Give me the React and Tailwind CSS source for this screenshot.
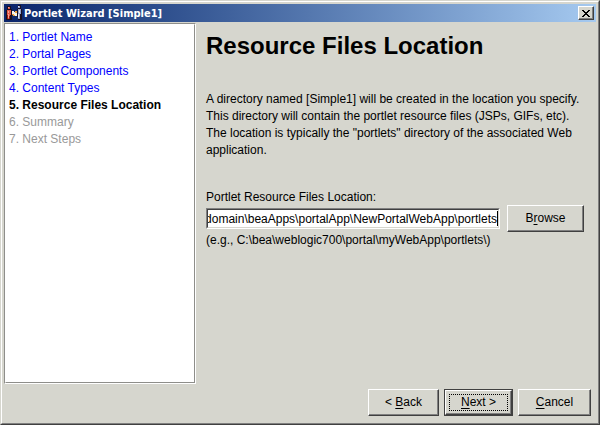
import { useLayoutEffect, useRef } from 'react';

const STEPS = [
  'Portlet Name',
  'Portal Pages',
  'Portlet Components',
  'Content Types',
  'Resource Files Location',
  'Summary',
  'Next Steps',
];
const CURRENT = 4;

const RAISED =
  'border border-t-white border-l-white border-r-[#404040] border-b-[#404040] shadow-[inset_-1px_-1px_0_#808080]';

function WizardIcon() {
  return (
    <svg width="16" height="16" viewBox="0 0 16 16" shapeRendering="crispEdges" aria-hidden="true">
      <path fill="#1a1020" d="M1 1h4v3h1v11H0V5h1zM12 0h3v4h1v11h-4v-3h-1V4h1z" />
      <path fill="#e25a48" d="M2 2h2v2H2zM1 5h4v5H4v4H1z" />
      <path fill="#f5a593" d="M2 2h1v1H2zM2 6h1v2H2zM2 9h1v4H2z" />
      <path fill="#9c1c12" d="M3 11h1v3H3zM1 10h1v4H1z" />
      <path fill="#93a2cc" d="M12 1h2v2h-2zM12 4h3v5h-1v5h-2z" />
      <path fill="#dfe5f5" d="M12 1h1v1h-1zM13 5h1v3h-1zM12 9h1v4h-1z" />
      <path fill="#f6f2ea" d="M6 6h2v1h1v1h2v3H9v-1H8V9H6z" />
      <path fill="#eda23c" d="M6 9h2v1H6zM9 6h2v2H9zM7 10h2v1H7z" />
    </svg>
  );
}

function Button({ before, hotkey, after, className, focused }) {
  const label = (
    <>
      {before}
      <span className="underline underline-offset-2">{hotkey}</span>
      {after}
    </>
  );
  if (focused) {
    return (
      <button type="button" className={`h-[27px] border border-[#404040] ${className}`}>
        <span className={`flex h-full p-[3px] ${RAISED}`}>
          <span className="flex flex-1 items-center justify-center border border-dotted border-black">
            <span>{label}</span>
          </span>
        </span>
      </button>
    );
  }
  return (
    <button type="button" className={`h-[27px] ${RAISED} ${className}`}>
      {label}
    </button>
  );
}

function PathField() {
  const ref = useRef(null);
  useLayoutEffect(() => {
    ref.current.scrollLeft = ref.current.scrollWidth;
  }, []);
  return (
    <div className="flex h-[21px] min-w-0 flex-1 border border-t-[#808080] border-r-white border-b-white border-l-[#808080]">
      <div className="flex min-w-0 flex-1 items-center border border-t-[#404040] border-r-[#d6d6ce] border-b-[#d6d6ce] border-l-[#404040] bg-white">
        <input
          id="location"
          ref={ref}
          type="text"
          className="h-full min-w-0 flex-1 bg-white outline-none"
          defaultValue="C:\bea\user_projects\mydomain\beaApps\portalApp\NewPortalWebApp\portlets"
        />
        <span className="h-[15px] w-px bg-black" />
      </div>
    </div>
  );
}

export default function App() {
  return (
    <div className="flex min-h-screen flex-col border border-t-[#d6d6ce] border-r-[#404040] border-b-[#404040] border-l-[#d6d6ce] bg-[#d6d6ce] font-['Liberation_Sans',Arial,sans-serif] text-[12px] leading-[17px] text-black">
      <div className="flex flex-1 flex-col border border-t-white border-r-[#808080] border-b-[#808080] border-l-white p-[2px]">
        <header className="mb-px flex h-[18px] items-center bg-linear-to-r from-[#0a246a] to-[#a6caf0] pr-[2px] pl-[2px]">
          <WizardIcon />
          <h1 className="ml-[2px] flex-1 font-['DejaVu_Sans_Condensed','DejaVu_Sans',sans-serif] text-[11px] font-bold text-white">
            Portlet Wizard [Simple1]
          </h1>
          <button
            type="button"
            aria-label="Close"
            className={`flex h-[14px] w-4 items-center justify-center bg-[#d6d6ce] ${RAISED}`}
          >
            <svg width="8" height="7" viewBox="0 0 8 7" shapeRendering="crispEdges">
              <path d="M0 0h2v1h1v1h2V1h1V0h2v1H7v1H6v1H5v1h1v1h1v1h1v1H6V6H5V5H3v1H2v1H0V6h1V5h1V4h1V3H2V2H1V1H0z" />
            </svg>
          </button>
        </header>

        <div className="flex flex-1">
          <nav className="w-48 border border-t-[#8e8e8a] border-r-white border-b-white border-l-[#8e8e8a]">
            <ol className="h-full border border-t-white border-r-[#8e8e8a] border-b-[#8e8e8a] border-l-white bg-white px-[3px] py-1">
              {STEPS.map((step, i) => (
                <li
                  key={step}
                  className={
                    i < CURRENT ? 'text-[#0000ff]' : i === CURRENT ? 'font-bold text-black' : 'text-[#999999]'
                  }
                >
                  {i + 1}. {step}
                </li>
              ))}
            </ol>
          </nav>

          <main className="min-w-0 flex-1 pt-2 pr-3 pl-[10px]">
            <h2 className="text-[24px] leading-[30px] font-bold">Resource Files Location</h2>
            <p className="mt-[30px] max-w-[378px]">
              A directory named [Simple1] will be created in the location you specify. This directory will contain the
              portlet resource files (JSPs, GIFs, etc). The location is typically the "portlets" directory of the
              associated Web application.
            </p>
            <label htmlFor="location" className="mt-[30px] block leading-4">
              Portlet Resource Files Location:
            </label>
            <div className="flex items-center gap-[7px]">
              <PathField />
              <Button before="B" hotkey="r" after="owse" className="w-[77px]" />
            </div>
            <p>(e.g., C:\bea\weblogic700\portal\myWebApp\portlets\)</p>
          </main>
        </div>

        <footer className="flex justify-end gap-[5px] pt-[5px] pr-[5px] pb-[5px]">
          <Button before="< " hotkey="B" after="ack" className="w-[71px]" />
          <Button hotkey="N" after="ext >" className="w-[69px]" focused />
          <Button hotkey="C" after="ancel" className="w-[73px]" />
        </footer>
      </div>
    </div>
  );
}
